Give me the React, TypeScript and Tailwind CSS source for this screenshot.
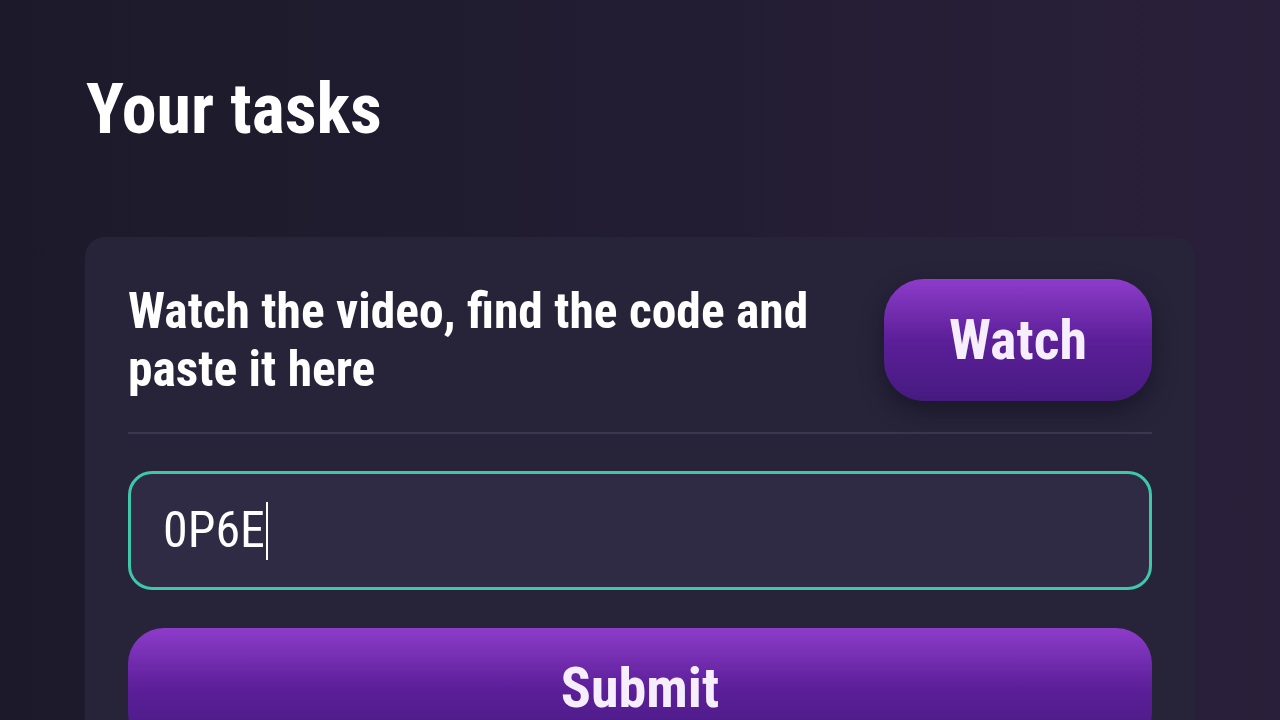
import React from 'react'

export default function App() {
  return (
    <div className="min-h-screen w-full overflow-hidden bg-gradient-to-r from-[#1c1a2a] via-[#221d32] to-[#2a1f3a] font-['Roboto_Condensed','Roboto',sans-serif] [font-stretch:75%]">
      <div className="pl-[86px] pt-[74px]">
        <h1 className="text-[70px] leading-none font-bold text-white">Your tasks</h1>
      </div>

      <div className="ml-[85px] mt-[93px] w-[1110px] rounded-[20px] bg-[#27243a] px-[43px] pt-[42px] pb-10">
        <div className="flex items-center justify-between">
          <p className="w-[720px] text-[49.5px] leading-[58px] font-bold text-white">
            Watch the video, find the code and paste it here
          </p>
          <button className="h-[122px] w-[268px] rounded-[40px] bg-gradient-to-b from-[#8e3cca] via-[#5c1f99] to-[#461a80] text-[56px] font-bold text-[#f6eefc] shadow-[0_10px_24px_rgba(10,6,20,0.45)]">
            Watch
          </button>
        </div>

        <div className="mt-[31px] h-[2px] w-full bg-[#3b3751]" />

        <div className="mt-[37px] flex h-[119px] items-center rounded-[24px] border-[3px] border-[#3fc7aa] bg-[#2f2b44] pl-[32px]">
          <span className="text-[50px] font-normal text-white">0P6E</span>
          <span className="ml-[1px] h-[58px] w-[2px] bg-white" />
        </div>

        <button className="mt-[38px] flex h-[120px] w-full items-center justify-center rounded-[36px] bg-gradient-to-b from-[#8e3cca] via-[#5c1f99] to-[#461a80] text-[56px] font-bold text-[#f6eefc]">
          Submit
        </button>
      </div>
    </div>
  )
}
